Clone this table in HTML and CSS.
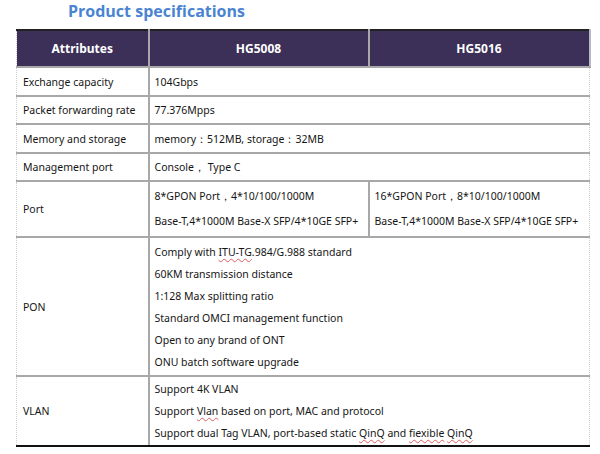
FILE: index.html
```html
<!DOCTYPE html>
<html>
<head>
<meta charset="utf-8">
<link rel="stylesheet" href="styles.css">
</head>
<body>
<div class="page">
  <h1 class="title">Product specifications</h1>
  <table class="spec">
    <colgroup>
      <col class="c1"><col class="c2"><col class="c3">
    </colgroup>
    <thead>
      <tr><th>Attributes</th><th>HG5008</th><th>HG5016</th></tr>
    </thead>
    <tbody>
      <tr class="r29"><td>Exchange capacity</td><td colspan="2">104Gbps</td></tr>
      <tr class="r28"><td>Packet forwarding rate</td><td colspan="2">77.376Mpps</td></tr>
      <tr class="r29"><td>Memory and storage</td><td colspan="2">memory：512MB, storage：32MB</td></tr>
      <tr class="r28"><td>Management port</td><td colspan="2">Console， Type C</td></tr>
      <tr class="port">
        <td>Port</td>
        <td><div class="pl">8*GPON Port，4*10/100/1000M</div><div class="pl">Base-T,4*1000M Base-X SFP/4*10GE SFP+</div></td>
        <td><div class="pl">16*GPON Port，8*10/100/1000M</div><div class="pl">Base-T,4*1000M Base-X SFP/4*10GE SFP+</div></td>
      </tr>
      <tr class="pon">
        <td>PON</td>
        <td colspan="2">
          <div class="ml">Comply with <span class="sp">ITU-TG</span>.984/G.988 standard</div>
          <div class="ml">60KM transmission distance</div>
          <div class="ml">1:128 Max splitting ratio</div>
          <div class="ml">Standard OMCI management function</div>
          <div class="ml">Open to any brand of ONT</div>
          <div class="ml">ONU batch software upgrade</div>
        </td>
      </tr>
      <tr class="vlan">
        <td>VLAN</td>
        <td colspan="2">
          <div class="ml">Support 4K VLAN</div>
          <div class="ml">Support <span class="sp">Vlan</span> based on port, MAC and protocol</div>
          <div class="ml">Support dual Tag VLAN, port-based static <span class="sp">QinQ</span> and <span class="sp">fiexible</span> <span class="sp">QinQ</span></div>
        </td>
      </tr>
    </tbody>
  </table>
</div>
</body>
</html>
```
FILE: styles.css
```css
html, body {
  margin: 0;
  padding: 0;
  background: #ffffff;
}
.page {
  width: 600px;
  height: 454px;
  padding: 0 0 0 16px;
  box-sizing: border-box;
  font-family: "Noto Sans", "Open Sans", sans-serif;
  color: #151515;
  overflow: hidden;
}
.title {
  margin: 0 0 0 52px;
  height: 29px;
  line-height: 23px;
  font-family: "Open Sans", "Noto Sans", sans-serif;
  font-weight: 700;
  font-size: 16px;
  color: #4a84d1;
}
.spec {
  width: 573px;
  border-collapse: collapse;
  table-layout: fixed;
  font-size: 10.5px;
  line-height: 14px;
}
.c1 { width: 132px; }
.c2 { width: 220px; }
.c3 { width: 221px; }
.spec th {
  background: #3c2f58;
  color: #ffffff;
  font-weight: 700;
  font-size: 12px;
  height: 35px;
  padding: 0;
  text-align: center;
  border-top: 2px solid #222;
  border-bottom: 2px solid #a8a8a8;
  border-left: 2px solid #a8a8a8;
  border-right: 2px solid #a8a8a8;
}
.spec th:first-child { border-left: 1px dotted #cfcfcf; }
.spec th:last-child { border-right: 2px solid #b8b8c8; }
.spec td {
  padding: 0 0 0 5px;
  border-bottom: 2px solid #a8a8a8;
  border-left: 2px solid #a8a8a8;
  vertical-align: middle;
  white-space: nowrap;
}
.spec td:first-child {
  border-left: 1px dotted #cfcfcf;
  padding-left: 6px;
}
.spec td:last-child { border-right: 1px dotted #cfcfcf; }
.r29 td { height: 27px; }
.r28 td { height: 26px; }
.port td { height: 54px; }
.pl { line-height: 25px; }
.ml { line-height: 22px; }
.pon td { height: 137px; }
.vlan td { height: 68px; border-bottom: 2px solid #111; }
.sp {
  text-decoration: underline wavy #e05a5a;
  text-decoration-thickness: 1px;
  text-underline-offset: 2px;
}
```
